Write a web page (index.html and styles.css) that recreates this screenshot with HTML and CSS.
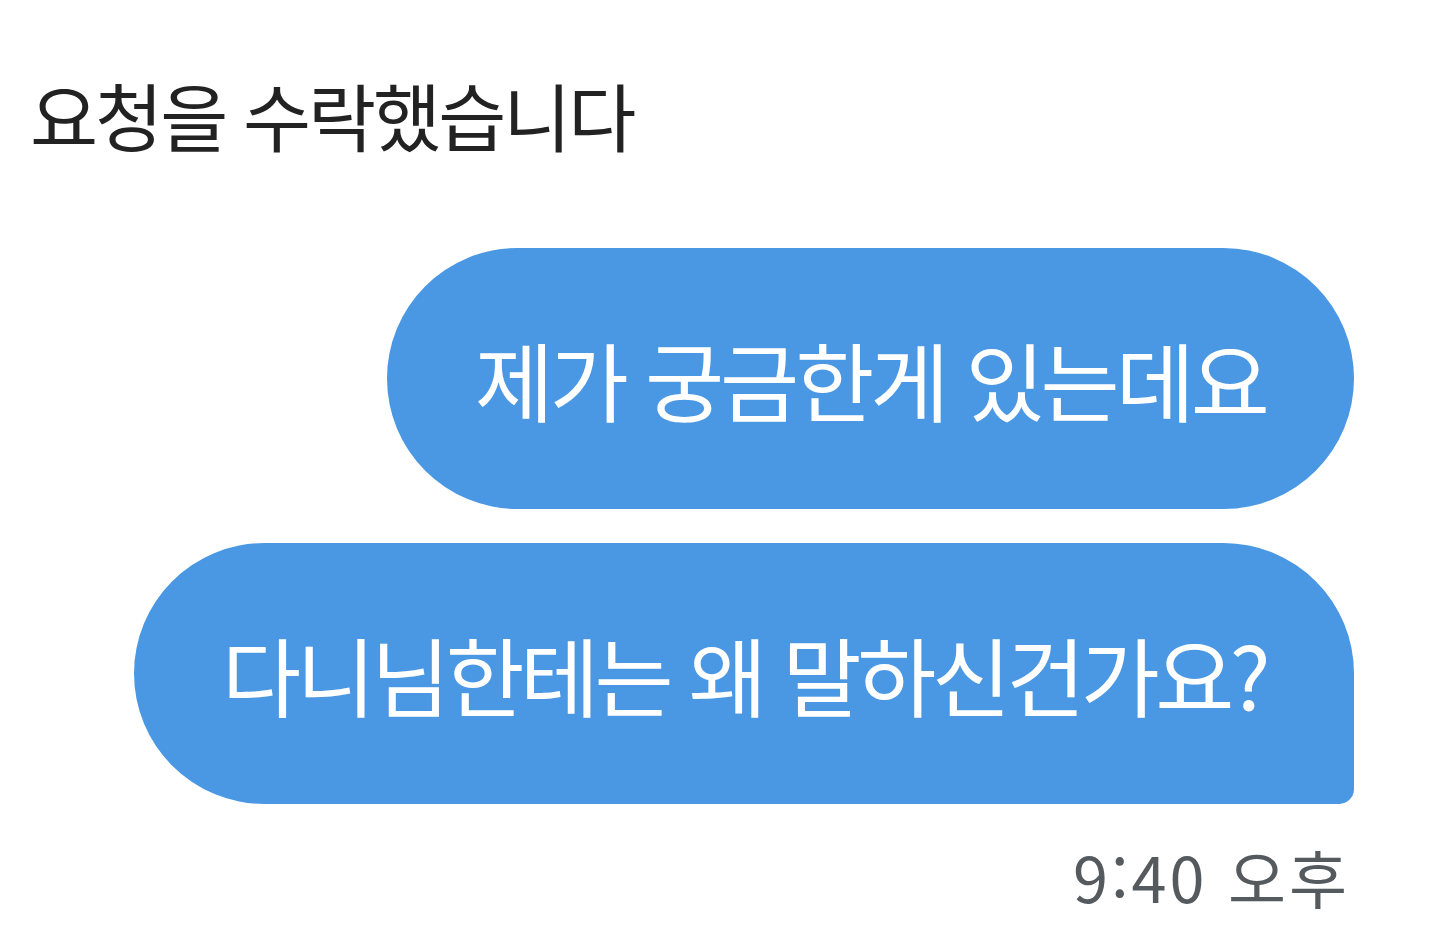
FILE: index.html
```html
<!DOCTYPE html>
<html lang="ko">
<head>
  <meta charset="UTF-8">
  <title>요청을 수락했습니다</title>
  <link rel="stylesheet" href="styles.css">
</head>
<body>
  <!-- Notice -->
  <div class="notice">요청을 수락했습니다</div>

  <!-- Messages -->
  <div class="thread">
    <div class="bubble first">제가 궁금한게 있는데요</div>
    <div class="bubble last">다니님한테는 왜 말하신건가요?</div>
    <div class="time">9:40 오후</div>
  </div>
</body>
</html>
```

FILE: styles.css
```css
/* Reset defaults */
* { margin: 0; padding: 0; box-sizing: border-box; }

body {
  background: #ffffff;
  font-family: "Noto Sans CJK KR", "Noto Sans", sans-serif;
  width: 1440px;
  height: 936px;
  overflow: hidden;
}

/* Top notice */
.notice {
  padding: 62px 0 0 30px;
  font-size: 74px;
  line-height: 104px;
  letter-spacing: -3px;
  color: #222222;
}

/* Message list */
.thread {
  display: flex;
  flex-direction: column;
  align-items: flex-end;
  gap: 34px;
  padding: 82px 86px 0 0;
}
.bubble {
  background: #4a97e3;
  color: #ffffff;
  height: 261px;
  display: flex;
  align-items: center;
  padding: 0 88px;
  font-size: 86px;
  letter-spacing: -4px;
  white-space: nowrap;
}
.bubble.first { border-radius: 131px; }
.bubble.last {
  border-radius: 131px 131px 15px 131px;
  letter-spacing: -4.6px;
}

/* Timestamp */
.time {
  margin-top: -2px;
  margin-right: 4px;
  font-size: 63px;
  line-height: 80px;
  letter-spacing: 3px;
  color: #555a5e;
}
```
